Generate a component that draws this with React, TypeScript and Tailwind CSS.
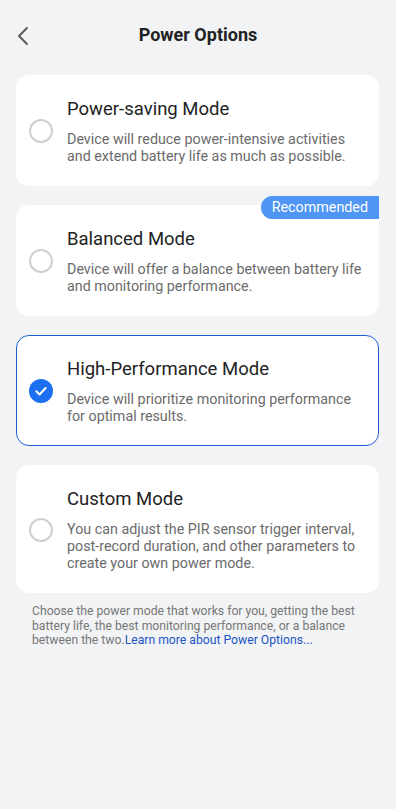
import React from 'react';

type Mode = {
  id: string;
  title: string;
  desc: string;
  badge?: string;
};

const modes: Mode[] = [
  {
    id: 'saving',
    title: 'Power-saving Mode',
    desc: 'Device will reduce power-intensive activities and extend battery life as much as possible.',
  },
  {
    id: 'balanced',
    title: 'Balanced Mode',
    desc: 'Device will offer a balance between battery life and monitoring performance.',
    badge: 'Recommended',
  },
  {
    id: 'high',
    title: 'High-Performance Mode',
    desc: 'Device will prioritize monitoring performance for optimal results.',
  },
  {
    id: 'custom',
    title: 'Custom Mode',
    desc: 'You can adjust the PIR sensor trigger interval, post-record duration, and other parameters to create your own power mode.',
  },
];

const Radio = ({ checked }: { checked: boolean }) =>
  checked ? (
    <div className="w-6 h-6 shrink-0 rounded-full bg-[#1b6ff0] flex items-center justify-center">
      <svg width="14" height="14" viewBox="0 0 24 24" fill="none" stroke="white" strokeWidth="3.6" strokeLinecap="round" strokeLinejoin="round">
        <path d="M4 12.5l5.5 5.5L20 7" />
      </svg>
    </div>
  ) : (
    <div className="w-6 h-6 shrink-0 rounded-full border-2 border-[#cfcfcf]" />
  );

export default function App() {
  const [selected, setSelected] = React.useState('high');

  return (
    <div className="min-h-[809px] w-full bg-[#f2f3f5] font-['Roboto','Noto_Sans',sans-serif] pb-10">
      {/* Header */}
      <div className="relative h-[68px] flex items-center justify-center">
        <button className="absolute left-[13px] top-[22px] p-1 text-[#555]">
          <svg width="12" height="20" viewBox="0 0 12 20" fill="none" stroke="currentColor" strokeWidth="1.8" strokeLinecap="round" strokeLinejoin="round">
            <path d="M10 2L2 10l8 8" />
          </svg>
        </button>
        <h1 className="text-[18px] font-bold text-[#222]">Power Options</h1>
      </div>

      {/* Cards */}
      <div className="mt-[7px] ml-4 mr-[17px] flex flex-col gap-[19px]">
        {modes.map((m) => {
          const active = selected === m.id;
          return (
            <div
              key={m.id}
              onClick={() => setSelected(m.id)}
              className={`relative bg-white rounded-[13px] border pl-[12px] pr-[12px] pt-[21px] pb-[20px] flex items-center gap-[14px] ${
                active ? 'border-[#1d5fd3]' : 'border-transparent'
              }`}
            >
              {m.badge && (
                <span className="absolute -top-[10px] -right-px h-[23px] px-[11px] flex items-center bg-[#4e95f4] text-white text-[14.3px] rounded-l-full rounded-tr-[7px]">
                  {m.badge}
                </span>
              )}
              <Radio checked={active} />
              <div className="flex-1">
                <div className="text-[18.5px] leading-6 text-[#222]">{m.title}</div>
                <p className="mt-[10px] text-[14.3px] leading-[17px] text-[#6b6b6b]">{m.desc}</p>
              </div>
            </div>
          );
        })}
      </div>

      {/* Footer note */}
      <p className="mt-[11px] pl-8 pr-7 text-[12.2px] leading-[14.5px] text-[#777]">
        Choose the power mode that works for you, getting the best battery life, the best monitoring performance, or a balance between the two.<span className="text-[#1a55c8]">Learn more about Power Options...</span>
      </p>
    </div>
  );
}
